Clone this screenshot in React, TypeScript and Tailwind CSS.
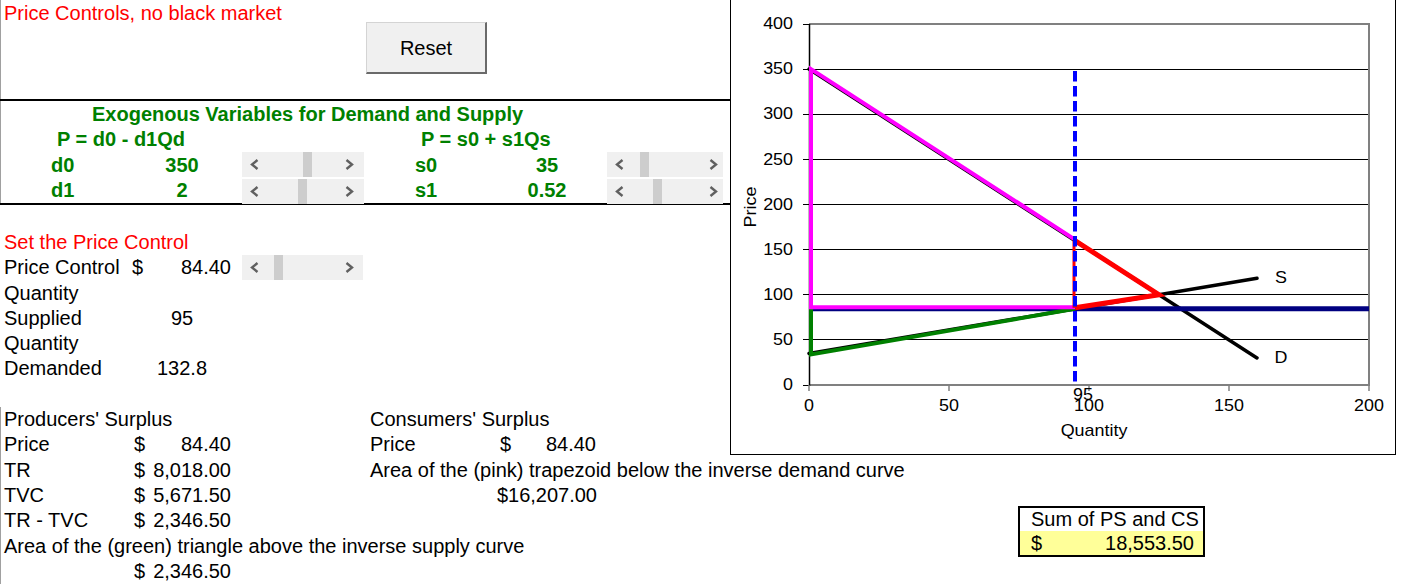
import type { ReactNode } from 'react'

// chart scale: Q 0..200 -> x 809..1369, P 0..400 -> y 385..24
const X = (q: number) => 809 + q * 2.8
const Y = (p: number) => 385 - p * 0.9025

function Chevron({ left }: { left?: boolean }) {
  return (
    <svg width="9" height="11" viewBox="0 0 9 11" className="shrink-0">
      <polyline
        points={left ? '7.5,1 2,5.5 7.5,10' : '1.5,1 7,5.5 1.5,10'}
        fill="none"
        stroke="#606060"
        strokeWidth="2.4"
      />
    </svg>
  )
}

function Scroll({ thumb, className = '' }: { thumb: number; className?: string }) {
  return (
    <div className={`relative flex shrink-0 items-center justify-between bg-[#f0f0f0] pl-[8px] ${className}`}>
      <Chevron left />
      <div className="absolute top-0 h-full w-[9px] bg-[#cdcdcd]" style={{ left: thumb }} />
      <Chevron />
    </div>
  )
}

function Row({ children, className = '' }: { children?: ReactNode; className?: string }) {
  return <div className={`flex h-[25.3px] items-center whitespace-nowrap leading-[25.3px] ${className}`}>{children}</div>
}

function Label({ x, y, children, anchor = 'middle', rotate }: { x: number; y: number; children: ReactNode; anchor?: 'start' | 'middle' | 'end'; rotate?: boolean }) {
  return (
    <text
      x={0}
      y={0}
      transform={`translate(${x} ${y})${rotate ? ' rotate(-90)' : ''} scale(1.12 1)`}
      textAnchor={anchor}
      dominantBaseline="central"
      fontSize={16}
      fill="#000"
    >
      {children}
    </text>
  )
}

function Chart() {
  const grid = [50, 100, 150, 200, 250, 300, 350]
  const ticks = [0, 50, 100, 150, 200, 250, 300, 350, 400]
  const qTicks = [0, 50, 100, 150, 200]
  const pc = Y(84.4)
  return (
    <div className="absolute left-[730px] top-0 h-[455px] w-[666px] border-x border-b border-black bg-white">
      <svg width="664" height="454" viewBox="731 0 664 454" className="block font-['Liberation_Sans',Arial,sans-serif]">
        {grid.map((p) => (
          <line key={p} x1={809} x2={1369} y1={Math.floor(Y(p)) + 0.5} y2={Math.floor(Y(p)) + 0.5} stroke="#000" strokeWidth={1} />
        ))}
        <polyline points="809,24 1369,24 1369,385" fill="none" stroke="#808080" strokeWidth={2} />
        <line x1={809} x2={1370} y1={385} y2={385} stroke="#808080" strokeWidth={2} />
        <line x1={809.5} x2={809.5} y1={24} y2={386} stroke="#000" strokeWidth={1.5} />
        {ticks.map((p) => (
          <line key={p} x1={803} x2={809} y1={Math.floor(Y(p)) + 0.5} y2={Math.floor(Y(p)) + 0.5} stroke="#000" strokeWidth={1} />
        ))}
        {qTicks.map((q) => (
          <line key={q} x1={X(q)} x2={X(q)} y1={385} y2={391} stroke="#808080" strokeWidth={1.5} />
        ))}

        {/* demand and supply */}
        <line x1={X(0)} y1={Y(350)} x2={X(160)} y2={Y(30)} stroke="#000" strokeWidth={3.5} strokeLinecap="round" />
        <line x1={X(0)} y1={Y(35)} x2={X(160)} y2={Y(118.2)} stroke="#000" strokeWidth={3.5} strokeLinecap="round" />

        {/* price control */}
        <line x1={809} x2={1369} y1={pc} y2={pc} stroke="#000080" strokeWidth={5} />

        {/* producer surplus */}
        <polyline points={`811,${pc} 811,${Y(35) + 1} ${X(95)},${pc}`} fill="none" stroke="#008000" strokeWidth={4} />

        {/* consumer surplus */}
        <polyline
          points={`${X(95)},${pc - 1.5} 811,${pc - 1.5} 811,${Y(350)} ${X(95)},${Y(160) - 1}`}
          fill="none"
          stroke="#ff00ff"
          strokeWidth={4}
        />

        {/* deadweight loss */}
        <line x1={X(95) - 1} x2={X(95) - 1} y1={Y(160)} y2={pc - 1} stroke="#ff0000" strokeWidth={3} />
        <polyline
          points={`${X(95)},${Y(160)} ${X(125)},${Y(100)} ${X(95)},${pc - 1}`}
          fill="none"
          stroke="#ff0000"
          strokeWidth={5}
        />

        <line x1={X(95)} x2={X(95)} y1={71} y2={385} stroke="#0000ff" strokeWidth={4} strokeDasharray="10.5 4.5" />

        {ticks.map((p) => (
          <Label key={p} x={793} y={Y(p)} anchor="end">
            {p}
          </Label>
        ))}
        {qTicks.map((q) => (
          <Label key={q} x={X(q)} y={406}>
            {q}
          </Label>
        ))}
        <Label x={1083} y={395}>95</Label>
        <Label x={1094} y={431}>Quantity</Label>
        <Label x={751} y={207} rotate>
          Price
        </Label>
        <Label x={1281} y={278}>S</Label>
        <Label x={1281} y={358}>D</Label>
      </svg>
    </div>
  )
}

export default function App() {
  return (
    <div className="relative h-[587px] w-[1401px] overflow-hidden bg-white font-['Liberation_Sans',Arial,sans-serif] text-[20px] leading-none text-black">
      <div className="shadow-[inset_1px_0_0_#a0a0a0]">
        <div className="h-[22px] whitespace-nowrap pl-[4px] leading-[26px] text-[#ff0000]">Price Controls, no black market</div>
        <button className="ml-[366px] flex h-[52px] w-[121px] items-center justify-center border-b-2 border-l border-r-2 border-t border-b-[#6a6a6a] border-l-[#d4d4d4] border-r-[#6a6a6a] border-t-[#d4d4d4] bg-[#f0f0f0] text-black">
          Reset
        </button>
        <div className="h-[25px]" />

        <div className="w-[730px] border-y-2 border-black font-bold text-[#008000]">
          <div className="h-[26px] whitespace-nowrap pl-[92px] leading-[26px]">Exogenous Variables for Demand and Supply</div>
          <div className="flex h-[25px] whitespace-nowrap leading-[25px]">
            <div className="ml-[57px] w-[364px]">P = d0 - d1Qd</div>
            <div>P = s0 + s1Qs</div>
          </div>
          <div className="flex h-[26px] items-start leading-[26px]">
            <div className="ml-[51px] w-[81px]">d0</div>
            <div className="w-[100px] text-center">350</div>
            <Scroll thumb={61} className="ml-[10px] h-[25px] w-[122px] pr-[10px]" />
            <div className="ml-[51px] w-[82px]">s0</div>
            <div className="w-[100px] text-center">35</div>
            <Scroll thumb={33} className="ml-[10px] h-[25px] w-[116px] pr-[5px]" />
          </div>
          <div className="flex h-[25px] items-start leading-[25px]">
            <div className="ml-[51px] w-[81px]">d1</div>
            <div className="w-[100px] text-center">2</div>
            <Scroll thumb={56} className="ml-[10px] mt-[1px] h-[25px] w-[122px] pr-[10px]" />
            <div className="ml-[51px] w-[82px]">s1</div>
            <div className="w-[100px] text-center">0.52</div>
            <Scroll thumb={46} className="ml-[10px] mt-[1px] h-[25px] w-[116px] pr-[5px]" />
          </div>
        </div>
      </div>

      <div className="h-[25px]" />
      <div className="pl-[4px]">
        <Row className="text-[#ff0000]">Set the Price Control</Row>
        <Row>
          <div className="w-[128px]">Price Control</div>
          <div className="flex w-[99px] justify-between">
            <span>$</span>
            <span>84.40</span>
          </div>
          <Scroll thumb={32} className="ml-[11px] h-[25px] w-[121px] pr-[9px]" />
        </Row>
        <Row>Quantity</Row>
        <Row>
          <div className="w-[128px]">Supplied</div>
          <div className="w-[100px] text-center">95</div>
        </Row>
        <Row>Quantity</Row>
        <Row>
          <div className="w-[128px]">Demanded</div>
          <div className="w-[100px] text-center">132.8</div>
        </Row>
        <Row />
      </div>

      <div className="flex shadow-[inset_1px_0_0_#a0a0a0]">
        <div className="w-[369px] pl-[4px]">
          <Row>Producers&apos; Surplus</Row>
          <Row>
            <div className="w-[130px]">Price</div>
            <div className="flex w-[97px] justify-between">
              <span>$</span>
              <span>84.40</span>
            </div>
          </Row>
          <Row>
            <div className="w-[130px]">TR</div>
            <div className="flex w-[97px] justify-between">
              <span>$</span>
              <span>8,018.00</span>
            </div>
          </Row>
          <Row>
            <div className="w-[130px]">TVC</div>
            <div className="flex w-[97px] justify-between">
              <span>$</span>
              <span>5,671.50</span>
            </div>
          </Row>
          <Row>
            <div className="w-[130px]">TR - TVC</div>
            <div className="flex w-[97px] justify-between">
              <span>$</span>
              <span>2,346.50</span>
            </div>
          </Row>
          <Row>Area of the (green) triangle above the inverse supply curve</Row>
          <Row>
            <div className="w-[130px]" />
            <div className="flex w-[97px] justify-between">
              <span>$</span>
              <span>2,346.50</span>
            </div>
          </Row>
        </div>

        <div className="w-[649px] pl-[1px]">
          <Row>Consumers&apos; Surplus</Row>
          <Row>
            <div className="w-[130px]">Price</div>
            <div className="flex w-[96px] justify-between">
              <span>$</span>
              <span>84.40</span>
            </div>
          </Row>
          <Row>Area of the (pink) trapezoid below the inverse demand curve</Row>
          <Row>
            <div className="w-[227px] text-right">$16,207.00</div>
          </Row>
        </div>

        <div className="mt-[99px] h-[51px] w-[187px] border-2 border-black">
          <div className="h-[23px] whitespace-nowrap pl-[11px] leading-[23px]">Sum of PS and CS</div>
          <div className="flex h-[24px] justify-between bg-[#ffff99] pl-[11px] pr-[9px] leading-[24px]">
            <span>$</span>
            <span>18,553.50</span>
          </div>
        </div>
      </div>

      <Chart />
    </div>
  )
}
